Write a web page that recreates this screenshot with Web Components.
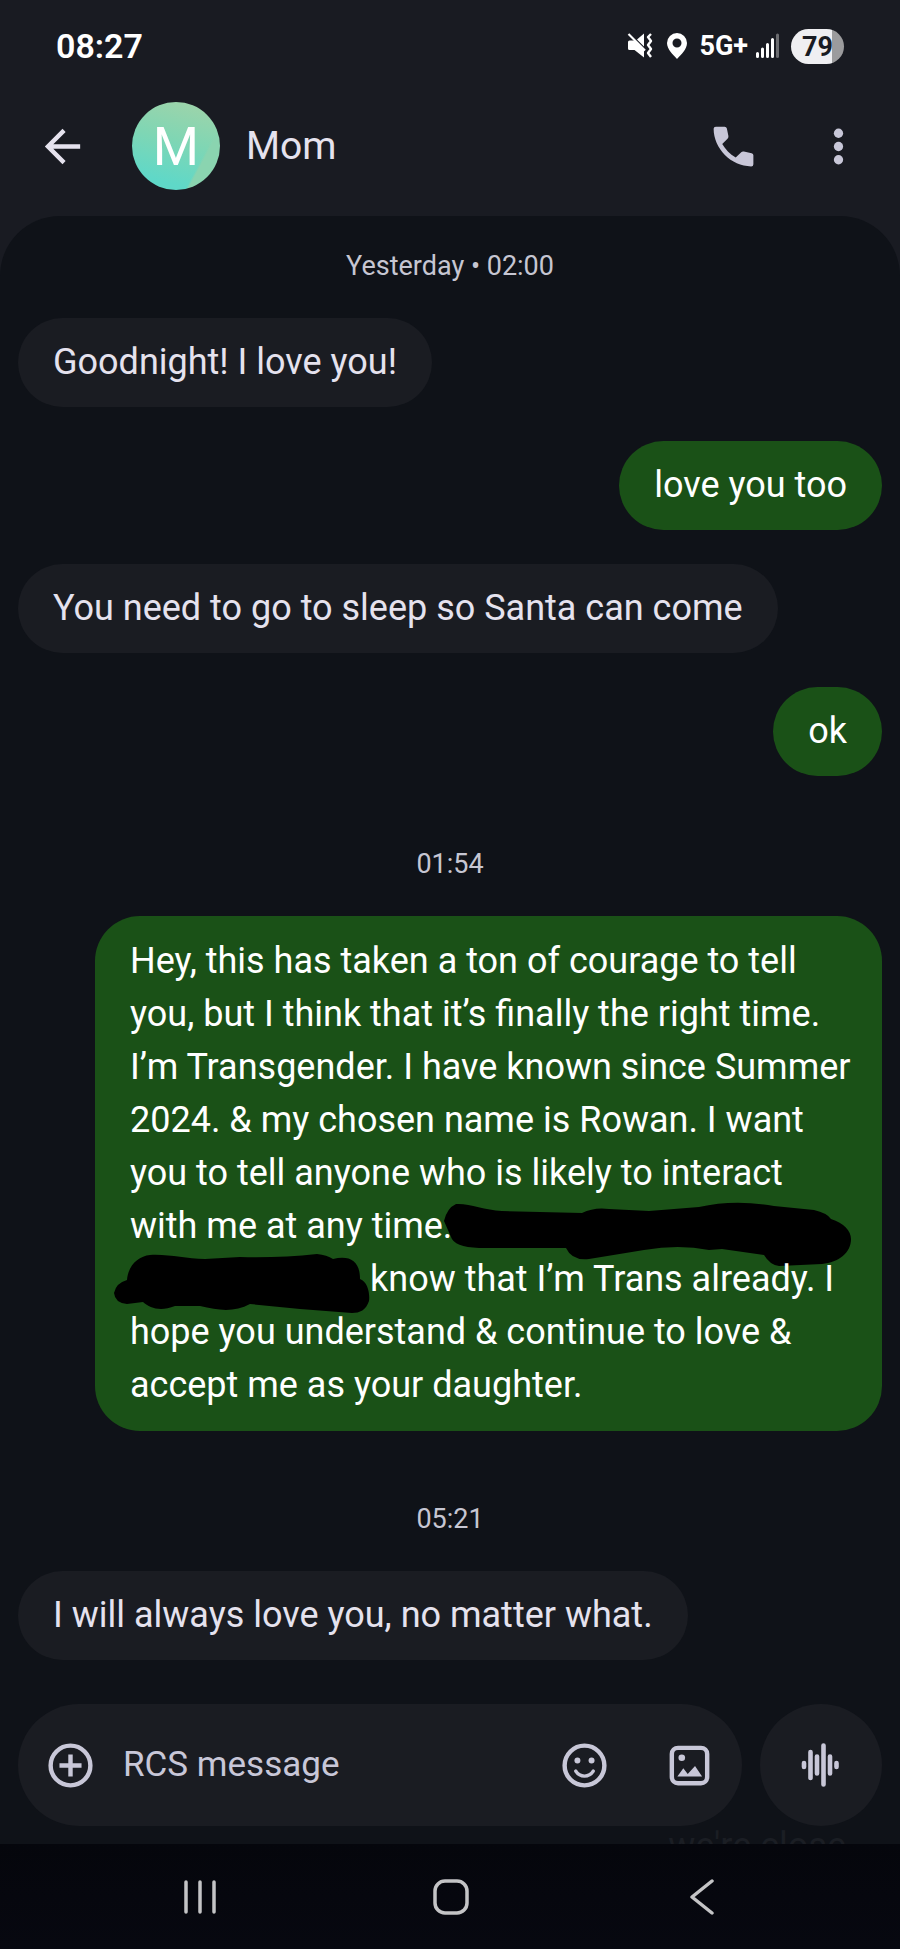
<!DOCTYPE html>
<html lang="en">
<head>
<meta charset="utf-8">
<meta name="viewport" content="width=device-width, initial-scale=1">
<title>Mom</title>
<style>
  body {
    margin: 0;
    background: #0f1218;
    font-family: Roboto, "Liberation Sans", sans-serif;
  }
</style>
</head>
<body>
<chat-screen>
  <status-bar slot="status" time="08:27" battery="79"></status-bar>
  <chat-header slot="header" initial="M">Mom</chat-header>
  <time-label>Yesterday • 02:00</time-label>
  <chat-bubble>Goodnight! I love you!</chat-bubble>
  <chat-bubble sent>love you too</chat-bubble>
  <chat-bubble>You need to go to sleep so Santa can come</chat-bubble>
  <chat-bubble sent>ok</chat-bubble>
  <time-label spaced>01:54</time-label>
  <chat-bubble sent long>Hey, this has taken a ton of courage to tell<br>you, but I think that it’s finally the right time.<br>I’m Transgender. I have known since Summer<br>2024. &amp; my chosen name is Rowan. I want<br>you to tell anyone who is likely to interact<br>with me at any time.<redacted-text shape="long"></redacted-text><br><redacted-text shape="short"></redacted-text>know that I’m Trans already. I<br>hope you understand &amp; continue to love &amp;<br>accept me as your daughter.</chat-bubble>
  <time-label spaced>05:21</time-label>
  <chat-bubble>I will always love you, no matter what.</chat-bubble>
  <message-composer slot="composer">we're close</message-composer>
  <system-nav slot="nav"></system-nav>
</chat-screen>

<script>
const define = (name, render) => customElements.define(name, class extends HTMLElement {
  constructor() {
    super();
    this.attachShadow({ mode: 'open' });
  }
  connectedCallback() {
    this.shadowRoot.innerHTML = render(this);
  }
});

const buttonReset = `
  button { display: block; flex: none; margin: 0; padding: 0; border: 0; background: none; color: inherit; font: inherit; }
  svg { display: block; }
`;

define('chat-screen', () => `
  <style>
    :host { display: flex; flex-direction: column; min-height: 100vh; background: #0f1218; }
    .top { background: #191b22; }
    .backdrop { flex: 1; display: flex; background: linear-gradient(#191b22 120px, #0f1218 120px); }
    main {
      flex: 1; min-width: 0; box-sizing: border-box;
      display: flex; flex-direction: column; align-items: flex-start; gap: 34px;
      padding: 32px 18px 44px;
      border-radius: 60px 60px 0 0;
      background: #0f1218;
    }
  </style>
  <div class="top">
    <slot name="status"></slot>
    <slot name="header"></slot>
  </div>
  <div class="backdrop"><main><slot></slot></main></div>
  <slot name="composer"></slot>
  <slot name="nav"></slot>
`);

define('status-bar', el => `
  <style>
    :host {
      display: flex; justify-content: space-between; align-items: center;
      height: 60px; padding: 16px 56px 0; color: #fff;
    }
    .time { font-size: 34px; line-height: 40px; font-weight: 600; }
    .icons { display: flex; align-items: center; }
    svg { display: block; }
    .pin { margin-left: 13px; }
    .net { margin-left: 11px; font-size: 27px; line-height: 32px; font-weight: 700; }
    .signal { margin-left: 8px; }
    .battery {
      width: 53px; height: 35px; margin-left: 12px; border-radius: 18px;
      background: linear-gradient(90deg, #efeff2 78%, #9b9b9d 78%);
      color: #191b22; font-size: 27px; line-height: 36px; font-weight: 700; text-align: center;
    }
  </style>
  <span class="time">${el.getAttribute('time')}</span>
  <div class="icons">
    <svg width="26" height="26" viewBox="0 0 26 26" role="img" aria-label="Vibrate">
      <path d="M1 9q0-1.500 1.500-1.500H7l2 1.500 8 8v7.500L7.500 17H2.500Q1 17 1 15.500ZM10 6.500 17 .5V13.500Z" fill="#fff"/>
      <path d="M1.500 1 18 17.500" stroke="#fff" stroke-width="2.200"/>
      <path d="M24 1l-3 3 3 4-3 4 3 4-3 4 3 4" fill="none" stroke="#fff" stroke-width="2.400" stroke-linejoin="round"/>
    </svg>
    <svg class="pin" width="22" height="28" viewBox="0 0 22 28" role="img" aria-label="Location">
      <path d="M11 1A10 10 0 0 0 1 11c0 6.500 6 11.500 10 16 4-4.500 10-9.500 10-16A10 10 0 0 0 11 1Zm0 5.500a4.500 4.500 0 1 1 0 9 4.500 4.500 0 0 1 0-9Z" fill="#fff" fill-rule="evenodd"/>
    </svg>
    <span class="net">5G+</span>
    <svg class="signal" width="23" height="26" viewBox="0 0 23 26" role="img" aria-label="Signal">
      <g stroke="#fff" stroke-width="3" stroke-linecap="round">
        <path d="M1.500 20.500v3M6.500 16v7.500M11.500 11.500v12M16.500 6.500v17"/>
        <path d="M21.500 2v21.500" stroke="#6b6c70"/>
      </g>
    </svg>
    <span class="battery">${el.getAttribute('battery')}</span>
  </div>
`);

define('chat-header', el => `
  <style>
    :host { display: flex; align-items: center; height: 140px; padding: 0 35px 0 36px; color: #c8c7d8; }
    ${buttonReset}
    .back { color: #e5e2ee; }
    .avatar {
      flex: none; width: 88px; height: 88px; margin: 0 26px 0 43px; border-radius: 50%;
      background:
        linear-gradient(118deg, transparent 74%, #8ad4b0 76%),
        linear-gradient(195deg, #9bd4ab 10%, #7fd6b4 45%, #5fd8c8 85%);
      color: #fff; font-size: 53px; line-height: 90px; text-align: center;
    }
    h1 { flex: 1; margin: 0; color: #e5e2ee; font-size: 39px; line-height: 48px; font-weight: 400; }
    .menu { margin-left: 52px; }
  </style>
  <button class="back" aria-label="Back"><svg width="53" height="53" viewBox="0 0 24 24" fill="currentColor"><path d="M20 11H7.830l5.590-5.590L12 4l-8 8 8 8 1.410-1.410L7.830 13H20v-2z"/></svg></button>
  <div class="avatar">${el.getAttribute('initial')}</div>
  <h1><slot></slot></h1>
  <button aria-label="Call"><svg width="53" height="53" viewBox="0 0 24 24" fill="currentColor"><path d="M20 21C11 21 3 13 3 4Q3 3 4 3H8Q8.800 3 9 3.800L9.700 7.300Q9.800 8 9.300 8.500L6.900 10.900C8.300 13.300 10.300 15.500 13 17L15.500 14.600Q16 14.100 16.700 14.300L20.200 15Q21 15.200 21 16V20Q21 21 20 21Z"/></svg></button>
  <button class="menu" aria-label="More options"><svg width="53" height="53" viewBox="0 0 24 24" fill="currentColor"><circle cx="12" cy="6" r="2.100"/><circle cx="12" cy="12" r="2.100"/><circle cx="12" cy="18" r="2.100"/></svg></button>
`);

define('time-label', () => `
  <style>
    :host { display: block; align-self: center; color: #c6c6d2; font-size: 27px; line-height: 36px; }
    :host([spaced]) { margin-top: 36px; }
  </style>
  <slot></slot>
`);

define('chat-bubble', () => `
  <style>
    :host {
      display: block; box-sizing: border-box; max-width: 100%;
      padding: 18px 35px; border-radius: 45px;
      background: #1a1c22; color: #e5e2ee;
      font-size: 36px; line-height: 53px;
    }
    :host([sent]) { align-self: flex-end; background: #1a5117; color: #fff; }
    :host([long]) { align-self: stretch; margin-left: 77px; padding: 19px 35px; white-space: nowrap; }
  </style>
  <slot></slot>
`);

const scribbles = {
  long: { width: 400, path: 'M0 20Q3 7 12 3C25 2 40 9 58 10L138 12Q150 6 165 8L205 10 255 6Q290-2 330 5L370 9Q383 12 387 18C400 22 407 30 407 38 407 52 395 61 378 63L335 65Q326 64 320 54L278 48 265 49Q235 43 200 49L145 58Q128 60 122 47L35 47Q10 46 7 36Z' },
  short: { width: 240, path: 'M-16 39Q-14 29-3 26C-2 12 8 2 20 1 40 0 55 5 75 5L110 3Q150 4 187 0 197 1 203 5C220 1 230 7 230 25 238 28 240 40 239 47 236 56 230 59 222 59L170 55 120 50C105 58 90 57 70 52L45 52C30 58 20 54 13 48L-3 50Q-15 49-16 39Z' }
};

define('redacted-text', el => {
  const { width, path } = scribbles[el.getAttribute('shape')];
  return `
    <style>
      :host { display: inline-block; vertical-align: top; }
      :host([shape="long"]) { margin-left: -8px; }
      svg { display: block; overflow: visible; }
    </style>
    <svg width="${width}" height="53" viewBox="0 -1 ${width} 53" role="img" aria-label="Redacted"><path d="${path}" fill="#000"/></svg>
  `;
});

define('message-composer', () => `
  <style>
    :host { display: block; color: #c8c7d8; }
    ${buttonReset}
    form { display: flex; gap: 18px; margin: 0; padding: 0 18px; }
    .field {
      flex: 1; min-width: 0; box-sizing: border-box; height: 122px; padding: 0 26px; border-radius: 61px;
      display: flex; align-items: center; background: #1a1c22;
    }
    input {
      flex: 1; min-width: 0; margin: 0 26px; padding: 0; border: 0; outline: 0; background: none;
      color: #e5e2ee; font: inherit; font-size: 35px; line-height: 48px; height: 48px;
    }
    input::placeholder { color: #c8c7d8; opacity: 1; }
    .gallery { margin-left: 52px; }
    .voice { display: grid; place-items: center; width: 122px; height: 122px; border-radius: 50%; background: #1a1c22; }
    .under {
      height: 18px; overflow: hidden; padding-right: 54px;
      color: #1b1e24; font-size: 36px; line-height: 40px; text-align: right;
    }
  </style>
  <form>
    <div class="field">
      <button type="button" aria-label="Add"><svg width="53" height="53" viewBox="0 0 24 24" fill="none" stroke="currentColor" stroke-width="2"><circle cx="12" cy="12" r="9"/><path d="M12 7v10M7 12h10"/></svg></button>
      <input type="text" placeholder="RCS message" aria-label="RCS message">
      <button type="button" aria-label="Emoji"><svg width="53" height="53" viewBox="0 0 24 24" fill="none" stroke="currentColor"><circle cx="12" cy="12" r="9" stroke-width="2"/><path d="M8 14.500Q9.500 16.800 12 16.800T16 14.500" stroke-width="1.500" stroke-linecap="round"/><g fill="currentColor" stroke="none"><circle cx="8.800" cy="9.700" r="1.350"/><circle cx="15.200" cy="9.700" r="1.350"/></g></svg></button>
      <button type="button" class="gallery" aria-label="Gallery"><svg width="53" height="53" viewBox="0 0 24 24"><rect x="4" y="4" width="16" height="16" rx="2.800" fill="none" stroke="currentColor" stroke-width="2"/><circle cx="8.500" cy="8.500" r="1.500" fill="currentColor"/><path d="M6.500 17 9.200 13.300 11.200 15.800 14.500 12.200 17.700 17Z" fill="currentColor"/></svg></button>
    </div>
    <button type="button" class="voice" aria-label="Record voice message"><svg width="44" height="46" viewBox="0 0 44 46" stroke="currentColor" stroke-width="4.600" stroke-linecap="round"><path d="M5 21v4M11.500 10v26M18 14.500v17M24.500 3.500v39M31 14.500v17M37.500 21v4"/></svg></button>
  </form>
  <div class="under"><slot></slot></div>
`);

define('system-nav', () => `
  <style>
    :host { display: block; background: linear-gradient(#05060c, #070810); color: #c4c4c6; }
    ${buttonReset}
    nav { display: flex; height: 105px; padding: 0 72px 0 74px; }
    nav button { flex: 1; display: grid; place-items: center; }
  </style>
  <nav aria-label="System">
    <button aria-label="Recent apps"><svg width="36" height="36" viewBox="0 0 36 36" stroke="currentColor" stroke-width="3.500" stroke-linecap="round"><path d="M4 3v30M18 3v30M32 3v30"/></svg></button>
    <button aria-label="Home"><svg width="38" height="36" viewBox="0 0 38 36" fill="none" stroke="currentColor" stroke-width="3.500"><rect x="3" y="2" width="32" height="32" rx="10"/></svg></button>
    <button aria-label="Back"><svg width="24" height="38" viewBox="0 0 24 38" fill="none" stroke="currentColor" stroke-width="3.500" stroke-linecap="round" stroke-linejoin="round"><path d="M22 3 2 19 22 35"/></svg></button>
  </nav>
`);
</script>
</body>
</html>
